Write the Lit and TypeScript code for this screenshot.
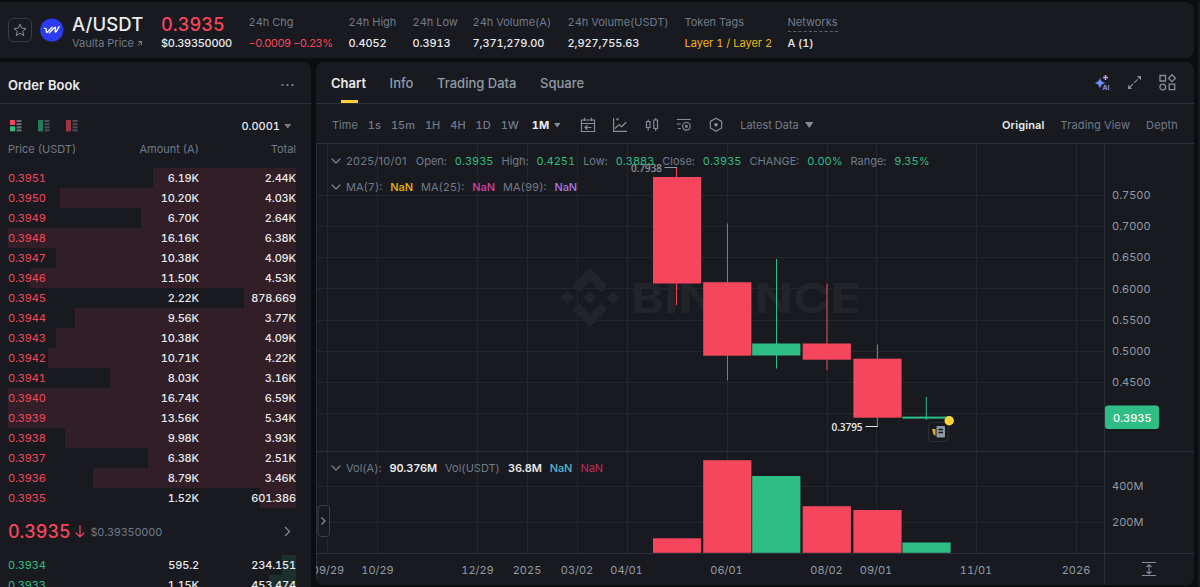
import { LitElement, html, svg, css } from "lit";
import { customElement } from "lit/decorators.js";

const UP = "#2ebd85";
const DOWN = "#f6465d";

const asks: [string, string, string, number][] = [
  ["0.3951", "6.19K", "2.44K", 143.5],
  ["0.3950", "10.20K", "4.03K", 236],
  ["0.3949", "6.70K", "2.64K", 155],
  ["0.3948", "16.16K", "6.38K", 288],
  ["0.3947", "10.38K", "4.09K", 240],
  ["0.3946", "11.50K", "4.53K", 266],
  ["0.3945", "2.22K", "878.669", 52],
  ["0.3944", "9.56K", "3.77K", 221],
  ["0.3943", "10.38K", "4.09K", 240],
  ["0.3942", "10.71K", "4.22K", 248],
  ["0.3941", "8.03K", "3.16K", 186],
  ["0.3940", "16.74K", "6.59K", 288],
  ["0.3939", "13.56K", "5.34K", 288],
  ["0.3938", "9.98K", "3.93K", 231],
  ["0.3937", "6.38K", "2.51K", 148],
  ["0.3936", "8.79K", "3.46K", 203.5],
  ["0.3935", "1.52K", "601.386", 36],
];
const bids: [string, string, string, number][] = [
  ["0.3934", "595.2", "234.151", 14],
  ["0.3933", "1.15K", "453.474", 27],
];

// x, open edge, close edge, wick x, wick top, wick bottom, volume top, rising
const candles: [number, number, number, number, number, number, number, boolean][] = [
  [653, 177, 283.5, 676.5, 168, 305, 538.3, false],
  [703.2, 282.2, 355.7, 727.5, 223.5, 380.5, 460.2, false],
  [752.2, 343.5, 355.5, 776.5, 259, 368.5, 476, true],
  [802.7, 343.5, 359.7, 827, 283.5, 370, 506.2, false],
  [853.4, 358.7, 417.7, 877.5, 344.5, 427, 510, false],
  [902.4, 416.6, 418.6, 926.3, 397, 420, 542.5, true],
];

@customElement("order-book")
export class OrderBook extends LitElement {
  static styles = css`
    :host { display: flex; flex-direction: column; background: #181a20; border-radius: 0 8px 0 0; overflow: hidden; color: #eaecef; }
    .title { height: 42px; flex: none; border-bottom: 1px solid #2b3139; display: flex; align-items: center; justify-content: space-between; padding: 5px 16px 0 8px; box-sizing: border-box; font-size: 13px; font-weight: 600; letter-spacing: 0.1px; }
    .tools { height: 28px; flex: none; margin-top: 8px; display: flex; align-items: center; padding: 0 19px 0 10px; gap: 16px; }
    .tools svg { display: block; }
    .tick { margin-left: auto; font-weight: 500; display: flex; align-items: center; gap: 4px; }
    .row { display: grid; grid-template-columns: 93px 98px 1fr; height: 20px; line-height: 21px; flex: none; margin: 0 15px 0 8px; position: relative; letter-spacing: -0.15px; }
    .row span { position: relative; }
    .row span:not(.price):not(.left) { text-align: right; font-weight: 500; }
    .head { color: #707a8a; margin-bottom: 9px; margin-top: -1px; letter-spacing: 0; }
    .row.head span:not(.left) { font-weight: 400; }
    .bar { position: absolute; right: 0; top: 0; bottom: 0; }
    .ask .price { color: #f6465d; }
    .ask .bar { background: #311e26; }
    .bid .price { color: #2ebd85; }
    .bid .bar { background: #1b2f2c; }
    .last { height: 47px; flex: none; display: flex; align-items: center; padding: 0 20px 0 8px; box-sizing: border-box; }
    .big { font-size: 18px; color: #f6465d; font-weight: 500; letter-spacing: -0.1px; }
    .usd { color: #707a8a; margin-left: 6px; letter-spacing: -0.25px; }
    .more { margin-left: auto; }
    .arrow { margin-left: 4px; }
  `;
  row([price, amount, total, width]: [string, string, string, number], side: string) {
    return html`<div class="row ${side}"><div class="bar" style="width:${width}px"></div>
      <span class="price">${price}</span><span>${amount}</span><span>${total}</span></div>`;
  }
  lines() {
    return svg`<g fill="#6b727e"><rect x="6.5" y="0" width="5" height="2"/><rect x="6.5" y="3.2" width="5" height="2"/><rect x="6.5" y="6.4" width="5" height="2"/><rect x="6.5" y="9.4" width="5" height="2"/></g>`;
  }
  render() {
    return html`
      <div class="title"><span>Order Book</span>
        <svg width="15" height="4" viewBox="0 0 15 4" fill="#848e9c"><circle cx="2.5" cy="2" r="1.1"/><circle cx="7.5" cy="2" r="1.1"/><circle cx="12.5" cy="2" r="1.1"/></svg></div>
      <div class="tools">
        <svg width="12" height="12"><rect width="5" height="5" fill="#f6465d"/><rect y="6.3" width="5" height="5" fill="#2ebd85"/>${this.lines()}</svg>
        <svg width="12" height="12" opacity=".6"><rect width="5" height="11.4" fill="#2ebd85"/>${this.lines()}</svg>
        <svg width="12" height="12" opacity=".6"><rect width="5" height="11.4" fill="#f6465d"/>${this.lines()}</svg>
        <span class="tick">0.0001 <svg width="8" height="5"><path d="M0 0h7.500L3.750 4.500z" fill="#707a8a"/></svg></span>
      </div>
      <div class="row head"><span class="left">Price (USDT)</span><span>Amount (A)</span><span>Total</span></div>
      ${asks.map((r) => this.row(r, "ask"))}
      <div class="last"><span class="big">0.3935</span>
        <svg class="arrow" width="10" height="13" fill="none" stroke="#f6465d" stroke-width="1.2"><path d="M5 0v12M.7 7.600 5 12l4.300-4.400"/></svg>
        <span class="usd">$0.39350000</span>
        <svg class="more" width="7" height="11" fill="none" stroke="#848e9c" stroke-width="1.2"><path d="M1 1l4.500 4.500L1 10"/></svg>
      </div>
      ${bids.map((r) => this.row(r, "bid"))}
    `;
  }
}

@customElement("price-chart")
export class PriceChart extends LitElement {
  static styles = css`
    :host { display: block; position: relative; overflow: hidden; }
    .plot { display: block; width: 100%; height: 100%; }
    .axis { font-size: 11px; fill: #929aa5; }
    .mark { font: 600 10px "Open Sans", sans-serif; }
    .brand { font: 700 41px Inter, sans-serif; fill: #212429; }
    .legend { position: absolute; left: 15px; display: flex; align-items: center; height: 16px; color: #707a8a; white-space: nowrap; }
    .ohlc { top: 9px; }
    .date { font-variant-numeric: normal; letter-spacing: 0.3px; margin-right: 9px; }
    .ma { top: 35px; }
    .vol { top: 316px; }
    .legend svg { margin-right: 5px; }
    .legend b { font-weight: 400; color: #2ebd85; margin: 0 8px; }
    .legend b.m { font-weight: 500; letter-spacing: -0.05px; }
    .legend b.y { color: #f0b90b; }
    .legend b.p { color: #d6409f; }
    .legend b.v { color: #a878e8; }
    .legend b.w { color: #eaecef; font-weight: 600; letter-spacing: -0.15px; }
    .legend b.c { color: #53b9cf; margin-left: 0; }
    .legend b.r { color: #c22d5d; margin-left: 0; }
  `;
  chevron() {
    return html`<svg width="10" height="6" fill="none" stroke="#848e9c" stroke-width="1.2"><path d="M.6.6 5 5 9.400.6"/></svg>`;
  }
  render() {
    const vx = [327, 377, 477, 527, 577, 627, 727, 827, 876, 976, 1076];
    const hy = [195.5, 226.5, 257.5, 288.5, 320, 351, 382, 413, 486, 522.5];
    const dates: [number, string][] = [[328, "09/29"], [377.5, "10/29"], [477.5, "12/29"], [527, "2025"], [577, "03/02"], [626.5, "04/01"], [726.5, "06/01"], [826.5, "08/02"], [876, "09/01"], [976, "11/01"], [1076, "2026"]];
    const prices: [number, string][] = [[199, "0.7500"], [230, "0.7000"], [261, "0.6500"], [293, "0.6000"], [324, "0.5500"], [355, "0.5000"], [385.5, "0.4500"], [489.5, "400M"], [526, "200M"]];
    return html`
      <svg class="plot" viewBox="316 144 878 441">
        <g stroke="#23272d" stroke-width="1">
          ${vx.map((x) => svg`<path d="M${x + 0.5} 144V553"/>`)}
          ${hy.map((y) => svg`<path d="M316 ${Math.floor(y) + 0.5}H1104"/>`)}
        </g>
        <g fill="#212429">
          <path d="M590 268l17.500 17.500-6.500 6.500-11-11-11 11-6.500-6.500zM590 327l-17.500-17.500 6.500-6.500 11 11 11-11 6.500 6.500zM567 291l6.500 6.500-6.500 6.500-6.500-6.500zM613 291l6.500 6.500-6.500 6.500-6.500-6.500zM590 291l6.500 6.500-6.500 6.500-6.500-6.500z"/>
          <text class="brand" x="631" y="313" textLength="230" lengthAdjust="spacingAndGlyphs">BINANCE</text>
        </g>
        <g stroke="#2b3139">
          <path d="M316.5 144V585M1104.5 144V585M316 451.500H1194M316 553.5H1194"/>
        </g>
        ${candles.map(([x, top, bottom, wx, hi, lo, vol, up]) => svg`
          <g fill=${up ? UP : DOWN}>
            <rect x=${x} y=${top} width="48.200" height=${bottom - top}/>
            <rect x=${wx - 0.5} y=${hi} width="1" height=${lo - hi}/>
            <rect x=${x} y=${vol} width="48.200" height=${552.8 - vol}/>
          </g>`)}
        <path d="M664.500 167.500H677" stroke="#929aa5"/>
        <text class="mark" x="631" y="171.500" textLength="31" fill="#8b929c">0.7938</text>
        <path d="M865.500 426.500H877.500" stroke="#eaecef"/>
        <text class="mark" x="831.500" y="430.500" textLength="31" fill="#eaecef">0.3795</text>
        <rect x="928.500" y="422.500" width="19.500" height="19" rx="4" fill="#181a20" stroke="#2b3139"/>
        <path d="M932 429h3.500v7l-2-1.500z" fill="#e0b020"/>
        <rect x="936.500" y="426" width="8.500" height="11.500" rx="1" fill="#8c97a7"/>
        <path d="M938.500 429.500h4.500M938.500 432.500h4.500" stroke="#181a20" stroke-width="1.500"/>
        <circle cx="949.200" cy="420.800" r="4.700" fill="#fcd535"/>
        <g class="axis" text-anchor="middle">${dates.map(([x, t]) => svg`<text x=${x} y="574">${t}</text>`)}</g>
        <g class="axis">${prices.map(([y, t]) => svg`<text x="1112" y=${y}>${t}</text>`)}</g>
        <rect x="1105" y="405.500" width="54" height="23.500" rx="3" fill="#2ebd85"/>
        <text x="1113" y="422" font-size="11" font-weight="500" fill="#fff">0.3935</text>
        <g fill="none" stroke="#848e9c" stroke-width="1.100">
          <path d="M1142 562.500h14M1142 575.500h14M1149 565v8.500M1146.500 567l2.500-2.300 2.500 2.300M1146.500 571.500l2.500 2.300 2.500-2.300"/>
        </g>
        <rect x="318" y="505.500" width="11.500" height="31" rx="3" fill="#181a20" stroke="#3a414b"/>
        <path d="M321.500 517.500l3.500 3.500-3.500 3.500" fill="none" stroke="#848e9c" stroke-width="1.200"/>
      </svg>
      <div class="legend ohlc">${this.chevron()}<span class="date">2025/10/01</span>Open:<b>0.3935</b>High:<b>0.4251</b>Low:<b>0.3883</b>Close:<b>0.3935</b>CHANGE:<b>0.00%</b>Range:<b>9.35%</b></div>
      <div class="legend ma">${this.chevron()}MA(7):<b class="m y">NaN</b>MA(25):<b class="m p">NaN</b>MA(99):<b class="m v">NaN</b></div>
      <div class="legend vol">${this.chevron()}Vol(A):<b class="w">90.376M</b>Vol(USDT)<b class="w">36.8M</b><b class="m c">NaN</b><b class="r">NaN</b></div>
    `;
  }
}

@customElement("app-root")
export class AppRoot extends LitElement {
  static styles = css`
    :host { display: grid; grid-template-columns: 1194px 2px; gap: 4px; height: 587px; overflow: hidden; padding-top: 2px; box-sizing: border-box; background: #0b0e11; color: #eaecef; font: 400 11px Inter, sans-serif; font-variant-numeric: tabular-nums; }
    .page { display: grid; grid-template-columns: 311px 878px; grid-template-rows: 56px 525px; gap: 4px 5px; height: 585px; }
    .side { background: #181a20; border-radius: 8px 0 0 0; }
    .ticker { grid-column: 1 / -1; background: #181a20; border-radius: 0 8px 8px 0; display: grid; grid-template-columns: 32px 32px 89px 87.5px 100px 64px 60px 95px 117px 103px 60px; padding-left: 8px; align-items: center; white-space: nowrap; }
    .star { width: 24px; height: 24px; border: 1px solid #333b47; border-radius: 5px; box-sizing: border-box; display: grid; place-items: center; }
    .cell { display: grid; grid-template-rows: 21px 21px; line-height: 20px; height: 42px; padding-top: 6px; }
    .cell > span:first-child { color: #707a8a; }
    .cell > span:last-child { font-weight: 500; letter-spacing: -0.1px; }
    .cell > span.pair { font-size: 18.5px; font-weight: 500; color: #eaecef; line-height: 25px; letter-spacing: 0.1px; }
    .cell > span.price { font-size: 18.2px; font-weight: 500; color: #f6465d; line-height: 25px; }
    .cell > span.usd { letter-spacing: -0.3px; }
    .cell > span.sub { color: #707a8a; font-weight: 400; letter-spacing: 0; }
    .cell > span.neg { color: #f6465d; font-weight: 400; letter-spacing: -0.5px; }
    .cell > span.tag { color: #f0b90b; font-weight: 400; letter-spacing: 0; }
    .dash { height: 20px; justify-self: start; box-sizing: border-box; border-bottom: 1px dashed #5a626e; }
    .panel { height: 523px; background: #181a20; border-radius: 8px; overflow: hidden; display: grid; grid-template-rows: 42px 40px 1fr; }
    .tabs { display: flex; padding: 0 18px 0 15px; gap: 23.6px; border-bottom: 1px solid #2b3139; font-size: 13px; font-weight: 500; color: #929aa5; line-height: 42px; }
    .tab { position: relative; }
    .on { color: #eaecef; font-weight: 600; }
    .tab.on::after { content: ""; position: absolute; left: 50%; margin-left: -8px; bottom: 0; width: 17px; height: 3px; background: #fcd535; }
    .acts { margin-left: auto; display: flex; align-items: center; gap: 17px; }
    .times { display: flex; align-items: center; padding: 3px 16px 0; border-bottom: 1px solid #2b3139; box-sizing: border-box; color: #707a8a; height: 40px; }
    .iv { display: flex; gap: 10px; font-weight: 500; }
    .iv span:first-child { font-weight: 400; }
    .on-iv { color: #eaecef; font-weight: 700; display: flex; align-items: center; gap: 5px; margin-left: 13px; }
    .icons { display: flex; gap: 16px; margin-left: 19px; }
    .latest { margin-left: 16px; display: flex; align-items: center; gap: 6px; }
    .modes { margin-left: auto; display: flex; gap: 16px; letter-spacing: 0.14px; }
  `;
  stat(label: string, value: string, cls = "") {
    return html`<div class="cell"><span>${label}</span><span class=${cls}>${value}</span></div>`;
  }
  render() {
    return html`
      <div class="page">
        <header class="ticker">
          <div class="star"><svg width="14" height="14" viewBox="0 0 14 14" fill="none" stroke="#848e9c"><path d="M7 1.200l1.700 4 4.300.4-3.200 2.800 1 4.200L7 10.300l-3.800 2.300 1-4.200L1 5.600l4.300-.4z"/></svg></div>
          <svg width="24" height="24" viewBox="0 0 24 24"><circle cx="11.800" cy="12" r="11.600" fill="#2b3bf0"/><path d="M4.300 10.300h1.200q.8 0 .8 1.200v1.800q0 1.700 1.200.6l4.600-4.600M9.300 14.800l5-5.100q1.400-1.200 1.200.5l-.4 3q0 1.500 1.200.4l2.800-5" fill="none" stroke="#fff" stroke-width="1.300" stroke-linecap="round" stroke-linejoin="round"/></svg>
          <div class="cell"><span class="pair">A/USDT</span><span class="sub">Vaulta Price <svg width="5" height="6" fill="none" stroke="#848e9c" stroke-width=".9"><path d="M.5 4.500l4-4M1.200.5h3.300v3.300"/></svg></span></div>
          <div class="cell"><span class="price">0.3935</span><span class="usd">$0.39350000</span></div>
          ${this.stat("24h Chg", "−0.0009 −0.23%", "neg")}
          ${this.stat("24h High", "0.4052")}
          ${this.stat("24h Low", "0.3913")}
          ${this.stat("24h Volume(A)", "7,371,279.00")}
          ${this.stat("24h Volume(USDT)", "2,927,755.63")}
          ${this.stat("Token Tags", "Layer 1 / Layer 2", "tag")}
          <div class="cell"><span class="dash">Networks</span><span>A (1)</span></div>
        </header>
        <order-book></order-book>
        <main class="panel">
          <nav class="tabs"><span class="tab on">Chart</span><span>Info</span><span>Trading Data</span><span>Square</span>
            <div class="acts">
              <svg width="16" height="16" viewBox="0 0 16 16"><path d="M6 2.500c.8 3.500 2 4.700 5.800 5.600C8 9 6.800 10.200 6 13.700 5.200 10.200 4 9 .2 8.100 4 7.200 5.200 6 6 2.500z" fill="#6f8cff"/><path d="M11.500 0v5M9 2.500h5" stroke="#c9a0dc" stroke-width="1.500"/><text x="8.500" y="14.500" font-size="6.500" font-weight="800" fill="#8585f5">AI</text></svg>
              <svg width="15" height="15" viewBox="0 0 15 15"><path d="M2.500 12.500l10-10" stroke="#848e9c" stroke-width="1.100" stroke-dasharray="5 1.500"/><path d="M9.800 1H14v4.200zM1 9.800V14h4.200z" fill="#848e9c"/></svg>
              <svg width="17" height="17" viewBox="0 0 17 17" fill="none" stroke="#848e9c" stroke-width="1.300"><path d="M1 1.500h5.500V7H1zM10.200 10.200h5.500v5.500h-5.500zM13 .7l3.500 3.500L13 7.700 9.500 4.200z"/><circle cx="3.800" cy="13" r="2.900"/></svg>
            </div>
          </nav>
          <div class="times">
            <div class="iv"><span>Time</span><span>1s</span><span>15m</span><span>1H</span><span>4H</span><span>1D</span><span>1W</span></div>
            <span class="on-iv">1M <svg width="7" height="5"><path d="M0 0h6.500L3.250 4.500z" fill="#848e9c"/></svg></span>
            <div class="icons">
              <svg width="16" height="16" fill="none" stroke="#848e9c" stroke-width="1.200"><path d="M1.500 3h13v11.500h-13zM1.500 6.500h13M4.500.8V4M11.500.8V4M11.500 10.500H5M7.500 8.200l-2.500 2.300 2.500 2.300"/></svg>
              <svg width="16" height="16" fill="none" stroke="#848e9c" stroke-width="1.200"><path d="M1.600 1v13.400H15M3 11.500l4.200-4 2.300 2.300 4.700-4.600M4 2h3M5.500 2v1.500"/></svg>
              <svg width="16" height="16" fill="none" stroke="#848e9c" stroke-width="1.200"><path d="M2.500 4.500h3.500v6H2.500zM9.800 3h3.700v8.500H9.800zM4.200 2.500v2M4.200 10.500v3M11.700 1v2M11.700 11.500V14"/></svg>
              <svg width="16" height="16" fill="none" stroke="#848e9c" stroke-width="1.200"><path d="M.8 2.500h14M.8 7h4M1.800 11.500h3"/><circle cx="10.400" cy="9.300" r="3.800"/><circle cx="10.400" cy="9.300" r="1"/></svg>
              <svg width="16" height="16" fill="none" stroke="#848e9c" stroke-width="1.200"><path d="M8 1.200l5.600 3.200v6.500L8 14.200l-5.600-3.300V4.400z"/><circle cx="8" cy="7.700" r="1.200" fill="#848e9c"/></svg>
            </div>
            <span class="latest">Latest Data <svg width="9" height="7"><path d="M0 0h8.500L4.250 6z" fill="#848e9c"/></svg></span>
            <div class="modes"><span class="on">Original</span><span>Trading View</span><span>Depth</span></div>
          </div>
          <price-chart></price-chart>
        </main>
      </div>
      <div class="side"></div>
    `;
  }
}
